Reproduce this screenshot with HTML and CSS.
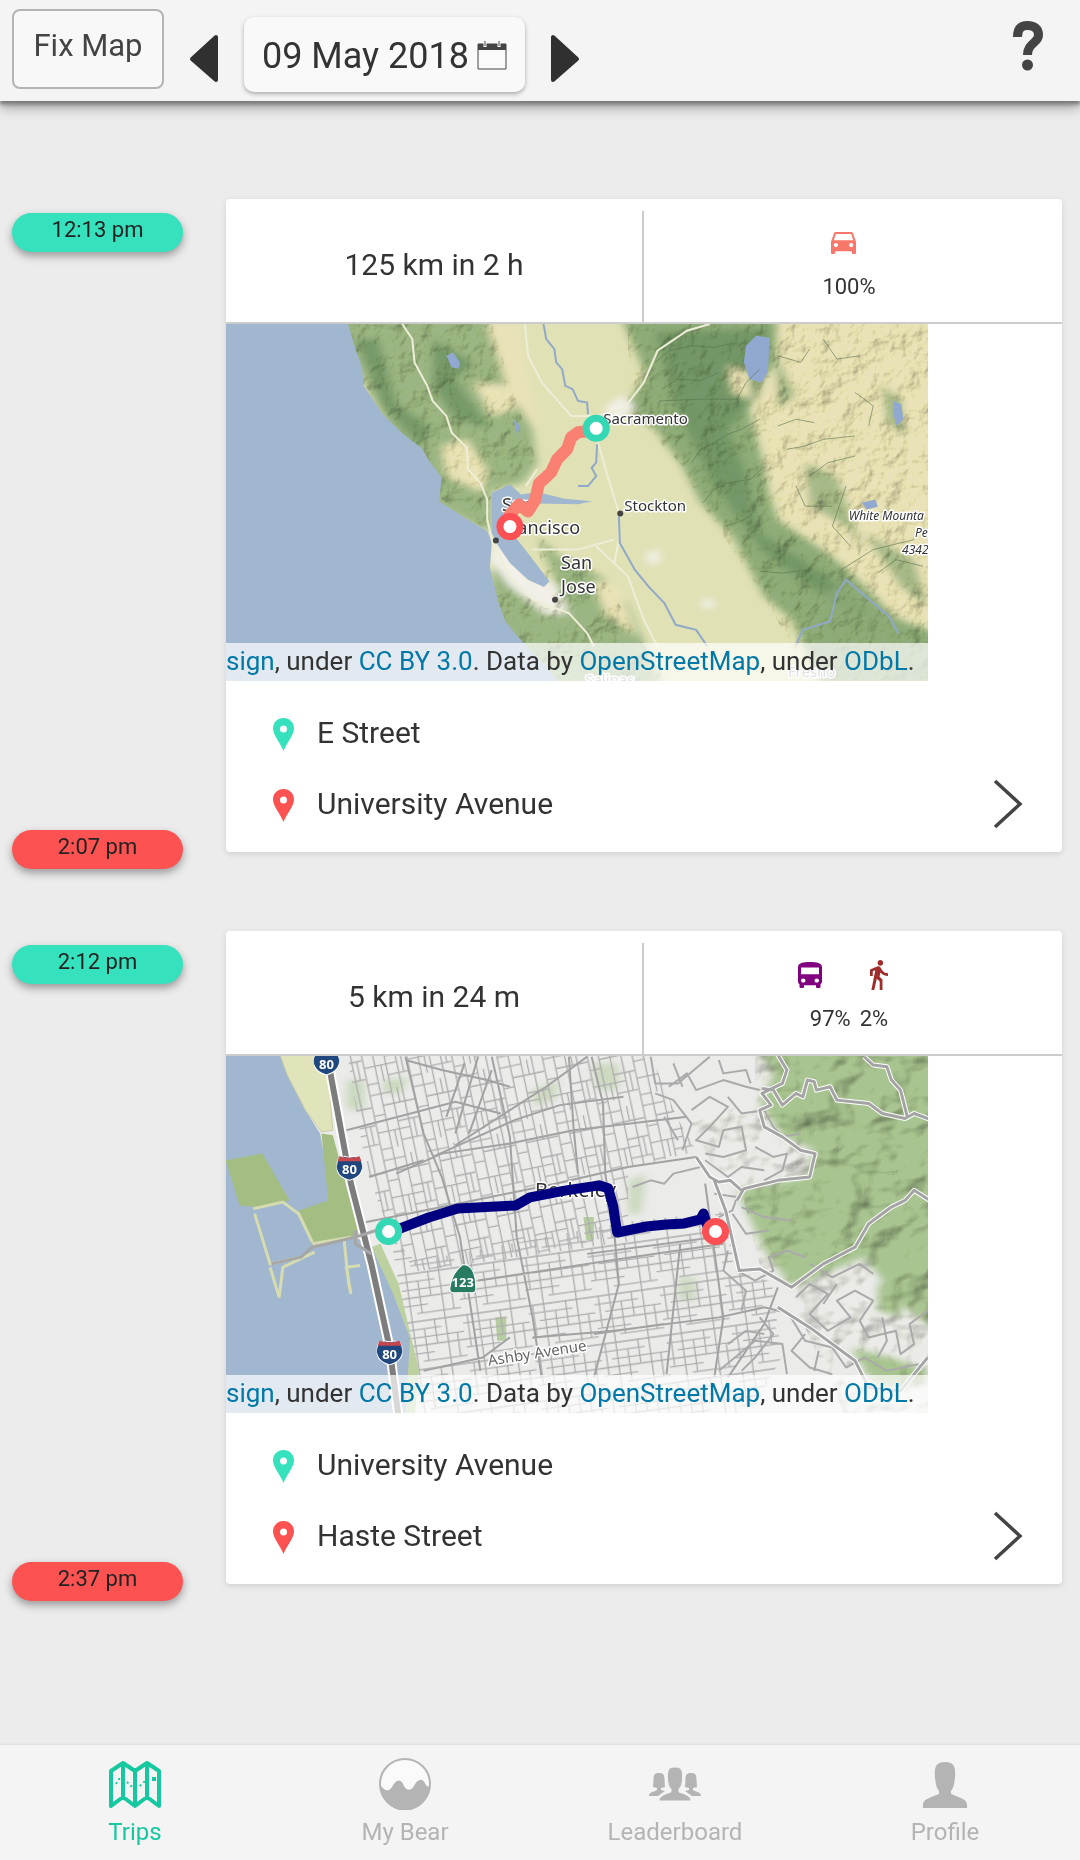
FILE: index.html
```html
<!DOCTYPE html>
<html lang="en">
<head>
<meta charset="utf-8">
<meta name="viewport" content="width=device-width, initial-scale=1">
<title>Trips</title>
<link rel="stylesheet" href="styles.css">
</head>
<body>
<svg class="defs" width="0" height="0" aria-hidden="true">
  <defs>
    <symbol id="pin" viewBox="0 0 21 33"><path fill="currentColor" fill-rule="evenodd" d="M10.500 0C4.500 0 0 4.600 0 10.500C0 17 7 24.500 10.500 33C14 24.500 21 17 21 10.500C21 4.600 16.500 0 10.500 0ZM10.500 7.500a3.500 3.500 0 1 1 0 7a3.500 3.500 0 1 1 0-7Z"/></symbol>
    <symbol id="chevron" viewBox="0 0 30 50"><path d="M2 2L27 25L2 48" fill="none" stroke="currentColor" stroke-width="3.500"/></symbol>
    <symbol id="shield" viewBox="0 0 26 27"><path d="M3 3Q6 5 8 2Q13 4 18 2Q20 5 23 3Q28 11 25 17Q23 23 13 26Q3 23 1 17Q-2 11 3 3Z" fill="#21477f" stroke="#fff"/><path d="M3 2Q13 5 23 2L25 7H1Z" fill="#c4484e"/></symbol>
    <filter id="soft" x="-10%" y="-10%" width="120%" height="120%"><feGaussianBlur stdDeviation="9"/></filter>
    <filter id="relief" x="0" y="0" width="100%" height="100%">
      <feTurbulence type="fractalNoise" baseFrequency=".045 .04" numOctaves="4" seed="8"/>
      <feColorMatrix values="0 0 0 0 0  0 0 0 0 0  0 0 0 0 0  1 0 0 0 0"/>
      <feDiffuseLighting surfaceScale="4" diffuseConstant="1.25" lighting-color="#fffff5"><feDistantLight azimuth="225" elevation="54"/></feDiffuseLighting>
    </filter>
    <filter id="ridges" x="0" y="0" width="100%" height="100%">
      <feTurbulence type="fractalNoise" baseFrequency=".022 .03" numOctaves="3" seed="3"/>
      <feColorMatrix values="0 0 0 0 0  0 0 0 0 0  0 0 0 0 0  1 0 0 0 0"/>
      <feDiffuseLighting surfaceScale="9" diffuseConstant="1.25" lighting-color="#fffffa"><feDistantLight azimuth="215" elevation="54"/></feDiffuseLighting>
    </filter>
    <pattern id="blocks" width="44" height="66" patternUnits="userSpaceOnUse" patternTransform="rotate(-12)"><path d="M1 0V66M12 0V66M23 0V66M34 0V66M1 3H23M12 15H44M1 24H12M23 33H44M1 41H34M23 52H44M1 58H12M18 41V58M29 0V15M39 33V52" stroke="#adadad" stroke-width="1.300" fill="none"/></pattern>
    <pattern id="rows" width="66" height="48" patternUnits="userSpaceOnUse" patternTransform="rotate(-8)"><path d="M0 1H66M0 9H44M10 17H66M0 25H66M0 33H34M22 41H66M5 1V33M16 0V48M27 9V41M38 0V25M49 0V48M59 17V41" stroke="#adadad" stroke-width="1.300" fill="none"/></pattern>
  </defs>
</svg>

<header class="topbar">
  <button class="fix" type="button">Fix Map</button>
  <button class="step" type="button" aria-label="Previous day"><svg width="30" height="50" viewBox="0 0 30 50"><path d="M27 3V46L3 25Z" fill="#303030" stroke="#303030" stroke-width="4" stroke-linejoin="round"/></svg></button>
  <button class="date" type="button">09 May 2018
    <svg width="30" height="30" viewBox="0 0 30 30" aria-hidden="true"><path d="M1 3H29V28H1Z" fill="#fafafa" stroke="#444"/><path d="M1 3H29V9H1Z" fill="#444"/><path d="M8 0V6M22 0V6" stroke="#fff" stroke-width="3"/><path d="M8 0V5M22 0V5" stroke="#444"/></svg>
  </button>
  <button class="step" type="button" aria-label="Next day"><svg width="30" height="50" viewBox="0 0 30 50"><path d="M3 3V46L27 25Z" fill="#303030" stroke="#303030" stroke-width="4" stroke-linejoin="round"/></svg></button>
  <button class="help" type="button" aria-label="Help"><svg width="32" height="50" viewBox="0 0 32 50"><path d="M5.500 16C5.500 8 9 4.500 15.500 4.500C22.500 4.500 26.500 8 26.500 14C26.500 22 15.500 22 15.500 34" fill="none" stroke="#444" stroke-width="9"/><circle cx="15.500" cy="44" r="5.500" fill="#444"/></svg></button>
</header>

<main class="trips">
  <article class="trip">
    <div class="times"><time class="pill start">12:13 pm</time><time class="pill end">2:07 pm</time></div>
    <div class="card">
      <div class="summary">
        <div class="distance">125 km in 2 h</div>
        <div class="modes">
          <div class="mode-icons"><svg width="25" height="22" viewBox="3 5 18 16" preserveAspectRatio="none" fill="#f7786b" role="img" aria-label="Car"><path d="M18.920 6.010C18.720 5.420 18.160 5 17.500 5h-11c-.66 0-1.210.42-1.420 1.010L3 12v8c0 .55.45 1 1 1h1c.55 0 1-.45 1-1v-1h12v1c0 .55.45 1 1 1h1c.55 0 1-.45 1-1v-8l-2.080-5.990zM6.500 16c-.83 0-1.500-.67-1.500-1.500S5.670 13 6.500 13s1.500.67 1.500 1.500S7.330 16 6.500 16zm11 0c-.83 0-1.500-.67-1.500-1.500s.67-1.500 1.500-1.500 1.500.67 1.500 1.500-.67 1.500-1.500 1.500zM5 11l1.500-4.500h11L19 11H5z"/></svg></div>
          <div class="shares"><span>100%</span></div>
        </div>
      </div>
      <div class="map">
        <svg class="tiles" viewBox="0 0 702 356" preserveAspectRatio="xMidYMid slice" role="img" aria-label="Route from Sacramento to San Francisco Bay">
          <defs><clipPath id="hills"><path transform="scale(.4529 .3333) translate(-13 -15)" d="M280 15L315 190L405 345L465 430L490 540L590 635L600 520L700 430L650 230L600 15ZM690 640L840 760L980 1080H740L630 905L600 780L740 870ZM900 15H1575V1080H1300L1200 830L1060 550L1020 440L900 270Z"/></clipPath></defs>
          <rect width="702" height="356" fill="#e0e1b5"/>
          <g class="geo" transform="scale(.4529 .3333) translate(-13 -15)">
            <g filter="url(#soft)">
              <path fill="#9bb684" d="M240 -20H590L625 150L650 230L690 330L700 430L670 490L600 510L600 640L480 560L380 350ZM700 650L750 710L840 770L900 850L975 1100H700L600 900V740L740 880L760 850Z"/>
              <path fill="#8eac79" d="M880 -20H1230L1225 130L1160 240L1200 440L1210 520L1230 600L1340 700L1400 770L1500 900L1600 950V1100H1330L1260 900L1200 830L1130 650L1060 550L1020 440L960 330L890 270L940 170Z"/>
              <path fill="#688e60" opacity=".7" d="M960 40L1210 30L1190 230L1120 330L1160 460L1190 640L1330 760L1450 900L1350 850L1200 700L1080 480L1000 250ZM300 60L350 60L390 250L470 330L440 380L360 260ZM470 60L560 130L520 180L600 330L520 300L470 200Z"/>
              <path fill="#e9e2b8" d="M1230 -20H1600V920L1480 880L1370 720L1240 600L1210 440L1180 250L1240 130ZM560 190L640 200L650 270L600 290ZM490 380L545 360L590 450L580 520L500 470ZM1120 140L1170 160L1170 240L1130 220ZM820 780L880 800L920 950L850 880ZM590 15L660 15L700 330L640 230Z"/>
              <path fill="#8dab79" opacity=".75" d="M1225 100L1270 230L1230 270ZM1290 430L1360 470L1420 700L1380 620L1300 560ZM1460 200L1500 240L1510 350L1470 310ZM1420 640L1530 720L1560 860L1500 800ZM1330 820L1380 790L1480 900L1520 1030L1350 980Z"/>
              <path fill="#f2f0e8" d="M605 660L650 700L690 780L740 790L770 880L720 885L640 800L595 720ZM850 260L890 230L920 270L860 310ZM940 700L970 690L970 730L945 735ZM1060 840H1090V865H1065Z"/>
            </g>
          </g>
          <rect class="shade" width="702" height="356" filter="url(#relief)" clip-path="url(#hills)"/>
          <g class="geo" transform="scale(.4529 .3333) translate(-13 -15)">
            <path fill="#a1b6cf" d="M0 0H280L300 90L315 150L318 200L360 285L405 345L445 385L465 430L490 475L484 545L535 590L590 635L600 665L596 745L615 850L630 905L668 967L720 1040L750 1090H0ZM600 520L640 495L665 525L700 518L760 538L822 545L790 554L700 552L660 570L645 640L685 710L727 785L715 802L680 780L640 730L615 680L600 640Z"/>
            <path fill="#91a9d0" d="M1160 80L1182 50L1212 56L1208 160L1194 190L1168 180L1155 130ZM500 110L515 100L530 130L528 148L512 145ZM1484 245L1502 255L1506 300L1492 320L1485 290ZM1415 550L1445 540L1450 562L1425 570ZM648 300L662 320L656 350Z"/>
            <path class="road" d="M403 15L425 60L430 130L458 200L470 245L500 290L512 340L545 385L548 450L575 490L590 540L590 600L602 670L640 770L690 840L770 880L810 940L825 980"/>
            <path class="road" d="M673 15L680 110L710 190L775 290L830 290L890 270L935 190L965 95L1030 35L1080 15M675 500L700 450M832 360L855 470L880 580L880 660L870 730M690 690L790 690L870 660M830 680L900 770L935 900L965 980"/>
            <path class="river" d="M714 15L720 60L738 90L742 130L755 150L762 200L778 210L790 245L810 250L812 285M832 375L830 430L820 445L830 470L812 500L790 500M880 590L882 670L915 750L945 800L980 850L1005 915L1050 930L1075 980M1270 975L1285 930L1345 905L1360 820L1380 780L1440 850L1475 890L1495 940"/>
            <path class="ridge" d="M960 130L990 95L1040 80L1090 85L1140 70M975 210L1010 180L1060 185L1100 160M970 245L1060 240L1140 240L1160 190L1190 150M1040 430L1060 390L1090 370L1120 345L1150 330L1190 300M1065 550L1090 510L1120 490L1170 480L1200 440M1110 620L1140 610L1170 590L1190 530M1230 320L1270 300L1310 310M1250 390L1290 380L1330 360L1400 350M1300 470L1340 430L1400 410M1190 755L1240 760L1300 750M1370 750L1440 690L1530 660M1230 110L1280 130L1300 90M1330 60L1360 120L1410 110M1400 220L1440 260L1430 320M1270 500L1290 560L1350 560M1380 500L1350 620L1390 680M1450 760L1490 720L1550 740"/>
          </g>
          <g class="label">
            <text x="377" y="100">Sacramento</text><text x="398" y="186">Stockton</text>
            <g class="city"><text x="276" y="186">San</text><text x="354" y="209" text-anchor="end">Francisco</text><text x="335" y="244">San</text><text x="335" y="268">Jose</text></g>
            <g class="peak"><text x="622" y="195">White Mounta</text><text x="688" y="212">Pe</text><text x="675" y="229">4342</text></g>
            <text class="muted" x="359" y="360">Salinas</text><text class="muted" x="561" y="352">Fresno</text>
          </g>
          <g fill="#444"><circle cx="394" cy="189" r="3"/><circle cx="270" cy="216" r="3"/><circle cx="329" cy="275" r="3"/></g>
          <path d="M369 106L352 108L345 113L341 125L331 135L325 148L313 159L309 176L302 187L293 180L284 190L284 200" fill="none" stroke="#fa8072" stroke-width="12" stroke-linecap="round" stroke-linejoin="round"/>
          <circle cx="370" cy="104" r="10" fill="#fff" stroke="#35d8b4" stroke-width="7"/><circle cx="284" cy="202" r="10" fill="#fff" stroke="#fc5054" stroke-width="7"/>
        </svg>
        <div class="credit"><a href="#design">sign</a>, under <a href="#cc">CC BY 3.0</a>. Data by <a href="#osm">OpenStreetMap</a>, under <a href="#odbl">ODbL</a>.</div>
      </div>
      <div class="places">
        <ul><li><svg class="from" width="21" height="33"><use href="#pin"/></svg>E Street</li><li><svg class="to" width="21" height="33"><use href="#pin"/></svg>University Avenue</li></ul>
        <button class="more" type="button" aria-label="Trip details"><svg width="30" height="50"><use href="#chevron"/></svg></button>
      </div>
    </div>
  </article>

  <article class="trip">
    <div class="times"><time class="pill start">2:12 pm</time><time class="pill end">2:37 pm</time></div>
    <div class="card">
      <div class="summary">
        <div class="distance">5 km in 24 m</div>
        <div class="modes">
          <div class="mode-icons">
            <svg width="24" height="26" viewBox="4 2 16 19" preserveAspectRatio="none" fill="#800080" role="img" aria-label="Bus"><path d="M4 16c0 .88.39 1.670 1 2.220V20c0 .55.45 1 1 1h1c.55 0 1-.45 1-1v-1h8v1c0 .55.45 1 1 1h1c.55 0 1-.45 1-1v-1.780c.61-.55 1-1.340 1-2.220V6c0-3.500-3.580-4-8-4s-8 .5-8 4v10zm3.500 1c-.83 0-1.500-.67-1.500-1.500S6.670 14 7.500 14s1.500.67 1.500 1.500S8.330 17 7.500 17zm9 0c-.83 0-1.500-.67-1.500-1.500s.67-1.500 1.500-1.500 1.500.67 1.500 1.500-.67 1.500-1.500 1.500zM18 11H6V6h12v5z"/></svg>
            <svg width="18" height="30" viewBox="6 1.500 13 21.500" fill="#a02c2c" role="img" aria-label="Walk"><path d="M13.500 5.500c1.100 0 2-.9 2-2s-.9-2-2-2-2 .9-2 2 .9 2 2 2zM9.800 8.900L7 23h2.100l1.800-8 2.100 2v6h2v-7.500l-2.100-2 .6-3C14.800 12 16.800 13 19 13v-2c-1.900 0-3.500-1-4.300-2.400l-1-1.600c-.4-.6-1-1-1.700-1-.3 0-.5.1-.8.1L6 8.300V13h2V9.600l1.800-.7"/></svg>
          </div>
          <div class="shares"><span>97%</span><span>2%</span></div>
        </div>
      </div>
      <div class="map">
        <svg class="tiles" viewBox="0 0 702 356" preserveAspectRatio="xMidYMid slice" role="img" aria-label="Route across Berkeley">
          <defs><clipPath id="east"><path transform="scale(.4529 .3333) translate(-13 -18)" d="M1180 18H1575V1100H1380L1260 740L1190 640L1150 420L1080 330L1040 220L1180 150Z"/></clipPath></defs>
          <rect width="702" height="356" fill="#ebebea"/>
          <g class="geo" transform="scale(.4529 .3333) translate(-13 -18)">
            <path filter="url(#soft)" fill="#a8c491" d="M1180 -20H1600V860L1500 760L1420 620L1260 710L1200 600L1160 480L1140 420L1290 380L1310 300L1240 260L1190 160L1220 70ZM1450 700L1510 690L1500 800L1450 780ZM1390 890L1480 920L1560 960V1000H1440Z"/>
            <path filter="url(#soft)" fill="#ccd9bf" d="M280 90H320V180H280ZM360 90L420 80L400 130H360ZM690 120L750 90L740 150L690 170ZM900 390L940 370L930 490L900 490ZM820 40H880V120H830ZM1010 680H1050V750H1010Z"/>
            <path fill="#b5cda0" d="M608 800H632V870H612ZM802 500H825V570H808Z"/>
          </g>
          <rect class="shade" width="702" height="356" filter="url(#ridges)" clip-path="url(#east)"/>
          <g transform="scale(.4529 .3333) translate(-13 -18)"><path fill="#a1b6cf" d="M0 0H130L150 75L190 180L222 250L240 380L290 430L300 560L340 590L370 640L390 750L420 860L432 990L420 1100H0Z"/></g>
          <path fill="url(#blocks)" d="M122 0H425L450 60L470 95L402 112L402 185L190 215L165 180L140 110Z"/>
          <path fill="url(#rows)" d="M165 180L190 205L402 165L500 155L508 215L545 225L555 300L525 356H195Z"/>
          <g class="geo" transform="scale(.4529 .3333) translate(-13 -18)">
            <path fill="#e1e4ba" stroke="#c7cda6" d="M130 0H215L240 75L250 240L225 245L190 180L150 75Z"/>
            <path fill="#a3bd83" d="M14 330L95 310L155 450L80 470L45 465ZM175 480L240 450L225 250L250 255L285 430L310 555L205 575Z"/>
            <path fill="none" stroke="#d6dcb0" stroke-width="3" d="M75 475L140 455L175 490L205 575M78 490L112 640L180 620M112 650L132 740L140 650L210 605M205 580L290 560M275 570L285 700L290 730L280 650L310 645"/>
            <path fill="#bdd0a0" d="M335 590L355 580L395 700L440 960L430 1100H410L420 860L380 720Z"/>
            <path class="street" d="M280 240L520 155L620 190M520 285L640 180L720 110L810 20M390 370L490 310L640 280L780 240L1030 200M470 320L650 210L750 165L890 140M410 20L450 250L490 380L530 560L575 960M600 20L640 260L655 560L690 800L710 980M770 20L780 230L790 370M820 20L845 160L850 370L870 550L880 700L825 980M305 520L490 470L740 400L900 350L1050 320M410 30L490 60L590 90L640 110M810 610L1090 560M570 690L860 630L1110 580M1015 580L985 970M1070 400L1110 800L1090 980M690 860L870 840L1100 800L1200 770L1260 790M330 380L450 330M450 960L580 920L640 860M825 850L980 820M1230 710L1200 820L1120 980M520 250L570 20M550 250L600 60M500 200L540 40"/>
            <path class="winding" d="M950 20L960 100L1010 100L1080 20M990 110L1030 70L1050 120L1110 90L1160 110L1190 120M1040 180L1080 140L1120 170L1080 230L1050 270L1100 290L1110 240L1150 230L1160 300L1110 320L1070 310M1120 140L1150 190L1200 180L1220 230L1240 260L1280 250M1070 330L1120 380L1150 350L1200 360M1180 290L1220 320L1250 310L1240 360L1200 390M1140 660L1180 690L1220 660L1210 620L1250 600L1290 620M1270 740L1300 700L1340 730L1300 790L1340 840L1390 800L1360 750L1400 720L1440 750L1410 810L1430 860L1490 840L1500 910L1530 880L1520 820L1560 780M1250 780L1290 870L1350 890L1380 950L1420 920L1470 960L1540 940M1130 490L1160 550L1210 540M1150 470L1200 500L1260 510M1290 850L1260 900L1300 950L1350 970M1100 960L1180 870L1240 880L1250 970M1300 640L1350 680L1410 640L1440 670M960 130L1000 150L1040 220L1020 300M980 200L1010 270M1000 40L1020 110M1100 30L1110 70L1160 60L1170 100M910 410L950 390L980 400L1000 370L1060 350M1120 600L1110 660L1160 720L1150 780M1190 800L1220 850L1180 920L1150 960M1090 430L1140 440L1130 480L1100 500M1120 880L1160 840L1200 850M1320 900L1310 960M1360 700L1330 760M1460 800L1470 870L1450 920"/>
            <path class="casing" d="M1230 15L1250 60L1240 100L1195 130L1215 165L1190 180L1200 230L1240 260L1280 300L1312 310L1300 380L1230 390L1155 415L1140 450M1195 115L1220 120L1240 165L1270 130L1285 140L1295 90L1310 95L1315 120L1345 110L1360 150L1430 160L1460 190L1510 205L1530 190L1570 210M1420 20L1440 45L1470 50L1480 90L1500 120L1515 200M1050 320L1080 380L1100 395L1125 390L1150 420M1235 690L1260 710L1330 640L1400 590L1430 520L1480 470L1510 450L1530 420L1570 455M1230 770L1300 830L1400 930L1430 1010L1500 1020L1560 920M1090 390L1115 480L1145 660L1190 655L1235 690"/>
            <path class="winding-main" d="M1230 15L1250 60L1240 100L1195 130L1215 165L1190 180L1200 230L1240 260L1280 300L1312 310L1300 380L1230 390L1155 415L1140 450M1195 115L1220 120L1240 165L1270 130L1285 140L1295 90L1310 95L1315 120L1345 110L1360 150L1430 160L1460 190L1510 205L1530 190L1570 210M1420 20L1440 45L1470 50L1480 90L1500 120L1515 200M1050 320L1080 380L1100 395L1125 390L1150 420M1235 690L1260 710L1330 640L1400 590L1430 520L1480 470L1510 450L1530 420L1570 455M1230 770L1300 830L1400 930L1430 1010L1500 1020L1560 920M1090 390L1115 480L1145 660L1190 655L1235 690"/>
            <path fill="none" stroke="#fff" stroke-width="10" d="M238 20L290 400L335 640L375 890L395 1100"/>
            <path fill="none" stroke="#7d7d7d" stroke-width="6" d="M238 20L290 400L335 640L375 890L395 1100"/>
            <path fill="none" stroke="#a6a6a6" stroke-width="3" d="M115 640L180 620L205 590L300 560L345 540M300 540L300 580L335 610"/>
          </g>
          <g class="label"><text class="town" x="309" y="141">Berkeley</text><text class="avenue" x="263" y="309" transform="rotate(-9 263 309)">Ashby Avenue</text></g>
          <g class="badge">
            <use href="#shield" x="88" y="-7" width="26" height="27"/><text x="101" y="13">80</text>
            <use href="#shield" x="111" y="98" width="26" height="27"/><text x="124" y="118">80</text>
            <use href="#shield" x="151" y="282" width="26" height="27"/><text x="164" y="302">80</text>
            <path d="M237 208Q250 208 250 232Q250 236 246 236H228Q224 236 224 232Q226 216 237 208Z" fill="#287b60" stroke="#fff"/><text x="237" y="230">123</text>
          </g>
          <path d="M164 176L203 161L232 152L290 149L304 141L340 134L373 129L382 132L387 150L391 176L420 170L440 168L458 167L474 163L477 157L481 170" fill="none" stroke="#000080" stroke-width="10" stroke-linecap="round" stroke-linejoin="round"/>
          <circle cx="163" cy="175" r="10" fill="#fff" stroke="#35d8b4" stroke-width="7"/><circle cx="489" cy="175" r="10" fill="#fff" stroke="#fc5054" stroke-width="7"/>
        </svg>
        <div class="credit"><a href="#design">sign</a>, under <a href="#cc">CC BY 3.0</a>. Data by <a href="#osm">OpenStreetMap</a>, under <a href="#odbl">ODbL</a>.</div>
      </div>
      <div class="places">
        <ul><li><svg class="from" width="21" height="33"><use href="#pin"/></svg>University Avenue</li><li><svg class="to" width="21" height="33"><use href="#pin"/></svg>Haste Street</li></ul>
        <button class="more" type="button" aria-label="Trip details"><svg width="30" height="50"><use href="#chevron"/></svg></button>
      </div>
    </div>
  </article>
</main>

<nav class="tabs">
  <a class="active" href="#trips"><svg width="52" height="52" viewBox="0 0 52 52" fill="none" stroke="currentColor"><path d="M2 13L14 5L26 13L38 5L50 13V48L38 39L26 48L14 39L2 48ZM14 5V39M26 13V48M38 5V39" stroke-width="4" stroke-linejoin="round"/><path d="M7 26L10 21L15 21L22 28L30 29L36 23L40 19" stroke-width="2" stroke-dasharray="2 3"/><path d="M43 19H47V23H43Z" fill="currentColor" stroke="none"/></svg>Trips</a>
  <a href="#bear"><svg width="52" height="52" viewBox="0 0 52 52"><circle cx="26" cy="26" r="25" fill="#fafafa" stroke="currentColor" stroke-width="2"/><path fill="currentColor" d="M1 27C5 32 9 35 13 29C17 21 22 20 25 28C28 33 32 33 35 28C39 20 44 20 47 27Q49 30 51 28A25 25 0 0 1 1 27Z"/></svg>My Bear</a>
  <a href="#leaders"><svg width="52" height="52" viewBox="0 0 52 52" fill="currentColor"><path id="person-side" d="M4 29C5 20 3 15 10 15C17 15 15 20 16 29L12 30L12 32L16 33L9 38H0C0 34 5 34 8 32V30Z"/><use href="#person-side" transform="matrix(-1 0 0 1 52 0)"/><path d="M10 43C10 38 16 36 22 34V31C19 28 19 25 18.500 21C18 13 19 9 26 9S34 13 33.500 21C33 25 33 28 30 31V34C36 36 42 38 42 43Z" stroke="#f4f4f4"/></svg>Leaderboard</a>
  <a href="#profile"><svg width="52" height="52" viewBox="0 0 52 52" fill="currentColor"><path d="M4 50C3 42 7 41 20 36V33C17 29 17 26 16 20C15 9 17 4 26 4S37 9 36 20C35 26 35 29 32 33V36C45 41 49 42 48 50Z"/></svg>Profile</a>
</nav>
</body>
</html>
```
FILE: styles.css
```css
* { box-sizing: border-box; }
body {
  margin: 0;
  min-height: 100vh;
  display: flex;
  flex-direction: column;
  background: #ececec;
  color: #333;
  font-family: Roboto, sans-serif;
}
button {
  font: inherit;
  color: inherit;
  background: none;
  border: 0;
  padding: 0;
}
svg { display: block; flex: none; }
.defs { position: absolute; }

.topbar {
  position: relative;
  display: flex;
  align-items: flex-start;
  height: 101px;
  padding: 9px 36px 0 12px;
  background: #f4f4f4;
  box-shadow: 0 3px 4px #777, 0 6px 12px #999;
}
.fix {
  width: 152px;
  height: 80px;
  padding-bottom: 8px;
  border: 2px solid #b4b4b4;
  border-radius: 8px;
  background: #f8f8f8;
  color: #444;
  font-size: 31px;
}
.step { margin: 25px 25px 0; }
.date {
  display: flex;
  align-items: center;
  justify-content: center;
  gap: 8px;
  width: 281px;
  height: 75px;
  margin-top: 8px;
  padding-top: 3px;
  border-radius: 10px;
  background: #f9f9f9;
  box-shadow: 0 2px 4px #aaa;
  font-size: 36px;
}
.help { margin: 12px 0 0 auto; }

.trips {
  flex: 1;
  display: flex;
  flex-direction: column;
  gap: 79px;
  padding: 98px 18px 79px 12px;
}
.trip {
  display: grid;
  grid-template-columns: 171px 1fr;
  column-gap: 43px;
}
.times {
  display: flex;
  flex-direction: column;
  justify-content: space-between;
  padding-top: 14px;
  margin-bottom: -17px;
}
.pill {
  height: 39px;
  border-radius: 20px;
  line-height: 33px;
  font-size: 22px;
  text-align: center;
  color: #222;
  box-shadow: 0 4px 8px #999;
}
.start { background: #35e2bd; }
.end { background: #fd5252; }

.card {
  border-radius: 4px;
  background: #fff;
  box-shadow: 0 2px 6px #d0d0d0;
}
.summary {
  display: grid;
  grid-template-columns: 1fr 1fr;
  height: 125px;
  padding-top: 12px;
  border-bottom: 2px solid #ccc;
}
.distance {
  display: flex;
  align-items: center;
  justify-content: center;
  padding-bottom: 5px;
  border-right: 2px solid #ccc;
  font-size: 30px;
}
.modes { padding-top: 15px; }
.mode-icons {
  display: flex;
  align-items: center;
  justify-content: center;
  gap: 48px;
  height: 34px;
  padding-right: 20px;
}
.shares {
  display: flex;
  justify-content: center;
  gap: 9px;
  padding: 14px 8px 0 0;
  line-height: 26px;
  font-size: 22px;
}

.map {
  position: relative;
  width: 84%;
  height: 357px;
  overflow: hidden;
}
.tiles { width: 100%; height: 100%; }
.credit {
  position: absolute;
  inset: auto 0 0;
  height: 38px;
  padding-right: 14px;
  background: rgba(255, 255, 255, .7);
  font-size: 26px;
  line-height: 36px;
  text-align: right;
  white-space: nowrap;
}
.credit a { color: #0078a8; text-decoration: none; }

.geo path { vector-effect: non-scaling-stroke; }
.shade { mix-blend-mode: multiply; }
.road { fill: none; stroke: #eeeed8; stroke-width: 2; }
.river { fill: none; stroke: #90a9c8; stroke-width: 2; }
.ridge { fill: none; stroke: #5b7250; stroke-width: 1; opacity: .6; }
.street { fill: none; stroke: #a2a2a2; stroke-width: 2; }
.winding { fill: none; stroke: #aaa; stroke-width: 2; stroke-linejoin: round; }
.casing { fill: none; stroke: #fff; stroke-width: 5; stroke-linejoin: round; }
.winding-main { fill: none; stroke: #a4a4a4; stroke-width: 3; stroke-linejoin: round; }
.label {
  font-family: "Noto Sans", sans-serif;
  font-size: 15px;
  fill: #333;
  stroke: #fff;
  stroke-width: 3px;
  stroke-linejoin: round;
  paint-order: stroke;
}
.city { font-size: 18px; }
.peak { font-size: 12px; font-style: italic; }
.muted { fill: #999; }
.town { font-size: 20px; }
.avenue { font-size: 15px; fill: #666; }
.badge {
  font-family: "Noto Sans", sans-serif;
  font-size: 13px;
  font-weight: bold;
  text-anchor: middle;
}
.badge text { fill: #fff; }

.places {
  display: flex;
  justify-content: space-between;
  align-items: flex-end;
  height: 171px;
  padding: 16px 39px 23px 47px;
}
.places ul { margin: 0; padding: 0; list-style: none; align-self: flex-start; }
.places li {
  display: flex;
  align-items: center;
  gap: 23px;
  height: 71px;
  font-size: 30px;
}
.places li svg { margin-top: 4px; }
.from { color: #35e2bd; }
.to { color: #fd5252; }
.more { color: #444; }

.tabs {
  display: grid;
  grid-template-columns: repeat(4, 1fr);
  height: 115px;
  background: #f4f4f4;
  box-shadow: 0 -1px 2px #ddd;
}
.tabs a {
  display: flex;
  flex-direction: column;
  align-items: center;
  gap: 8px;
  padding-top: 13px;
  color: #b4b4b4;
  font-size: 24px;
  line-height: 28px;
  text-decoration: none;
}
.tabs .active { color: #16c8a0; }
```
